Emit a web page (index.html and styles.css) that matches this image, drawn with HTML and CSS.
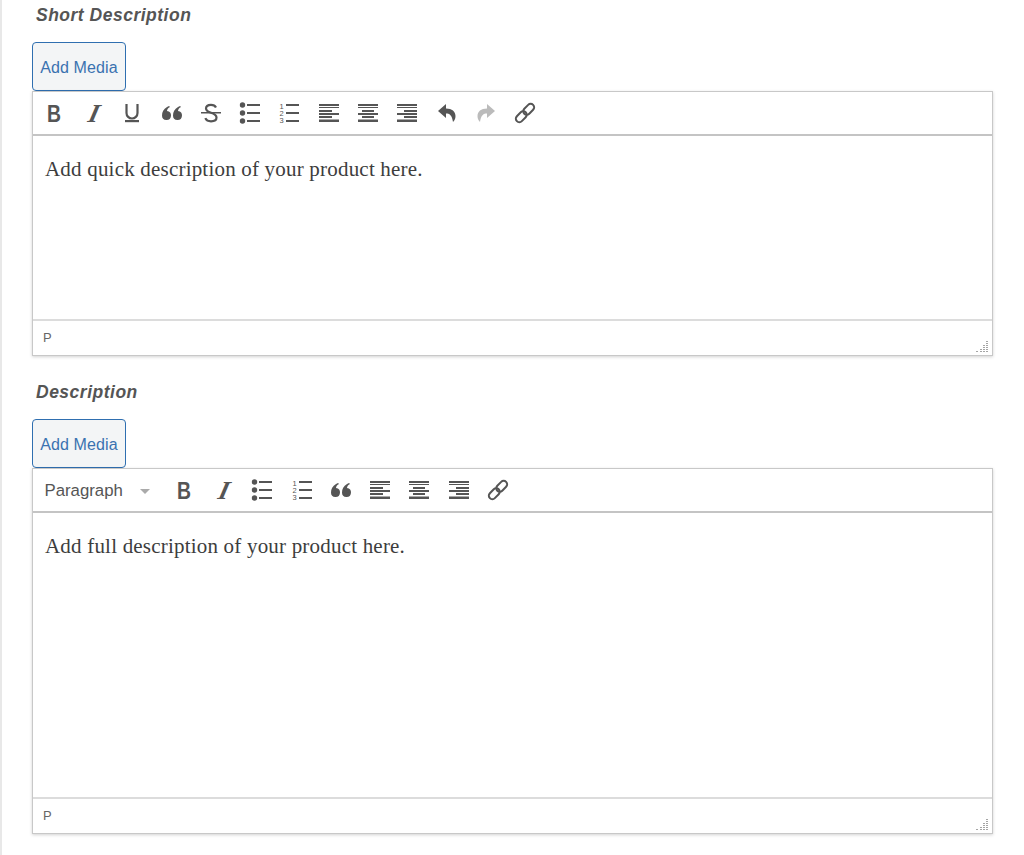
FILE: index.html
```html
<!DOCTYPE html>
<html lang="en">
<head>
<meta charset="utf-8">
<title>Product descriptions</title>
<link rel="stylesheet" href="styles.css">
</head>
<body>
<svg class="defs" width="0" height="0" aria-hidden="true">
  <defs>
    <symbol id="i-bold" viewBox="0 0 24 24"><text x="5" y="21" class="g-b" textLength="14" lengthAdjust="spacingAndGlyphs">B</text></symbol>
    <symbol id="i-italic" viewBox="0 0 24 24"><text x="0" y="0" class="g-i" transform="translate(6 20.500) skewX(-14)">I</text></symbol>
    <symbol id="i-under" viewBox="0 0 24 24"><path d="M6.500 3v9a5.500 5.500 0 0 0 11 0V3" fill="none" stroke="currentColor" stroke-width="2.200"/><rect x="5" y="19" width="14" height="2.200"/></symbol>
    <symbol id="i-quote" viewBox="0 0 24 24"><path d="M7 6C3.500 8 2 11 2 14.500a4.500 4.500 0 1 0 5-4.500c0-1.500 1-3 3-4L9 5ZM18 6c-3.500 2-5 5-5 8.500a4.500 4.500 0 1 0 5-4.500c0-1.500 1-3 3-4L20 5Z"/></symbol>
    <symbol id="i-strike" viewBox="0 0 24 24"><path d="M17 6.500C16 4.500 14.500 3.800 12 3.800 9 3.800 7 5.200 7 7.500c0 5 10.500 3.500 10.500 9 0 2.300-2.200 3.800-5.500 3.800-2.800 0-4.700-1-5.700-3.200" fill="none" stroke="currentColor" stroke-width="2.200"/><rect x="2" y="11" width="20" height="1.500"/></symbol>
    <symbol id="i-ul" viewBox="0 0 24 24"><circle cx="4.500" cy="4" r="2.700"/><circle cx="4.500" cy="12" r="2.700"/><circle cx="4.500" cy="20" r="2.700"/><rect x="9" y="3" width="13" height="2"/><rect x="9" y="11" width="13" height="2"/><rect x="9" y="19" width="13" height="2"/></symbol>
    <symbol id="i-ol" viewBox="0 0 24 24"><text x="2.500" y="8" class="g-n">1</text><text x="2.500" y="15" class="g-n">2</text><text x="2.500" y="22" class="g-n">3</text><rect x="9" y="3" width="13" height="2"/><rect x="9" y="11" width="13" height="2"/><rect x="9" y="19" width="13" height="2"/></symbol>
    <symbol id="i-left" viewBox="0 0 24 24"><rect x="2" y="3" width="20" height="2"/><rect x="2" y="6" width="20" height="1"/><rect x="2" y="9" width="13" height="2"/><rect x="2" y="12" width="20" height="2"/><rect x="2" y="15" width="13" height="2"/><rect x="2" y="18.500" width="20" height="2.500"/></symbol>
    <symbol id="i-center" viewBox="0 0 24 24"><rect x="2" y="3" width="20" height="2"/><rect x="2" y="6" width="20" height="1"/><rect x="6" y="9" width="12" height="2"/><rect x="2" y="12" width="20" height="2"/><rect x="6" y="15" width="12" height="2"/><rect x="2" y="18.500" width="20" height="2.500"/></symbol>
    <symbol id="i-right" viewBox="0 0 24 24"><rect x="2" y="3" width="20" height="2"/><rect x="2" y="6" width="20" height="1"/><rect x="9" y="9" width="13" height="2"/><rect x="2" y="12" width="20" height="2"/><rect x="9" y="15" width="13" height="2"/><rect x="2" y="18.500" width="20" height="2.500"/></symbol>
    <symbol id="i-undo" viewBox="0 0 24 24"><path d="M11 3 3 10l8 7v-4.500c3.500 0 6 1.500 7 8.500 2-2 2.500-4 2.500-6 0-4.500-3.500-7.500-9.500-7.500Z"/></symbol>
    <symbol id="i-redo" viewBox="0 0 24 24"><path d="M13 3l8 7-8 7v-4.500c-3.500 0-6 1.500-7 8.500-2-2-2.500-4-2.500-6 0-4.500 3.500-7.500 9.500-7.500Z"/></symbol>
    <symbol id="i-link" viewBox="0 0 24 24"><g fill="none" stroke="currentColor" stroke-width="2" transform="rotate(-45 12 12)"><rect x="0.500" y="8.500" width="12.500" height="7" rx="3.500"/><rect x="11" y="8.500" width="12.500" height="7" rx="3.500"/></g></symbol>
    <g id="grip" fill="#a5a5a5">
      <rect x="10" y="0" width="2" height="1"/>
      <rect x="10" y="2" width="2" height="1"/>
      <rect x="7" y="4" width="2" height="1"/><rect x="10" y="4" width="2" height="1"/>
      <rect x="7" y="6" width="2" height="1"/><rect x="10" y="6" width="2" height="1"/>
      <rect x="4" y="8" width="2" height="1"/><rect x="7" y="8" width="2" height="1"/><rect x="10" y="8" width="2" height="1"/>
      <rect x="0" y="10" width="2" height="1"/><rect x="4" y="10" width="2" height="1"/><rect x="7" y="10" width="2" height="1"/><rect x="10" y="10" width="2" height="1"/>
    </g>
  </defs>
</svg>
<main class="page">
  <section class="field">
    <h2 class="field-title">Short Description</h2>
    <button class="media-btn" type="button">Add Media</button>
    <div class="editor editor-short">
      <div class="toolbar">
        <span class="tool"><svg class="ic"><use href="#i-bold"/></svg></span>
        <span class="tool"><svg class="ic"><use href="#i-italic"/></svg></span>
        <span class="tool"><svg class="ic"><use href="#i-under"/></svg></span>
        <span class="tool"><svg class="ic"><use href="#i-quote"/></svg></span>
        <span class="tool"><svg class="ic"><use href="#i-strike"/></svg></span>
        <span class="tool"><svg class="ic"><use href="#i-ul"/></svg></span>
        <span class="tool"><svg class="ic"><use href="#i-ol"/></svg></span>
        <span class="tool"><svg class="ic"><use href="#i-left"/></svg></span>
        <span class="tool"><svg class="ic"><use href="#i-center"/></svg></span>
        <span class="tool"><svg class="ic"><use href="#i-right"/></svg></span>
        <span class="tool"><svg class="ic"><use href="#i-undo"/></svg></span>
        <span class="tool tool-off"><svg class="ic"><use href="#i-redo"/></svg></span>
        <span class="tool"><svg class="ic"><use href="#i-link"/></svg></span>
      </div>
      <div class="content"><p>Add quick description of your product here.</p></div>
      <div class="status">P
        <svg class="grip" width="12" height="11" viewBox="0 0 12 11"><use href="#grip"/></svg>
      </div>
    </div>
  </section>
  <section class="field field-next">
    <h2 class="field-title">Description</h2>
    <button class="media-btn" type="button">Add Media</button>
    <div class="editor editor-full">
      <div class="toolbar toolbar-full">
        <span class="format">Paragraph<i class="caret"></i></span>
        <span class="tool"><svg class="ic"><use href="#i-bold"/></svg></span>
        <span class="tool"><svg class="ic"><use href="#i-italic"/></svg></span>
        <span class="tool"><svg class="ic"><use href="#i-ul"/></svg></span>
        <span class="tool"><svg class="ic"><use href="#i-ol"/></svg></span>
        <span class="tool"><svg class="ic"><use href="#i-quote"/></svg></span>
        <span class="tool"><svg class="ic"><use href="#i-left"/></svg></span>
        <span class="tool"><svg class="ic"><use href="#i-center"/></svg></span>
        <span class="tool"><svg class="ic"><use href="#i-right"/></svg></span>
        <span class="tool"><svg class="ic"><use href="#i-link"/></svg></span>
      </div>
      <div class="content"><p>Add full description of your product here.</p></div>
      <div class="status">P
        <svg class="grip" width="12" height="11" viewBox="0 0 12 11"><use href="#grip"/></svg>
      </div>
    </div>
  </section>
</main>
</body>
</html>
```
FILE: styles.css
```css
* { box-sizing: border-box; }
html, body { margin: 0; padding: 0; background: #fff; }
body { height: 855px; overflow: hidden; font-family: "Liberation Sans", Arial, sans-serif; color: #555; }
.defs { position: absolute; }
.page { height: 855px; border-left: 2px solid #e8e8e8; padding: 4px 0 0 30px; }
.field-next { margin-top: 25px; }
.field-title { margin: 0 0 16px 4px; padding-top: 1px; font-size: 17.500px; line-height: 21px; letter-spacing: 0.500px; font-weight: bold; font-style: italic; color: #555; }
.media-btn { display: block; width: 94px; height: 49px; padding: 2px 0 0; background: #f3f5f6; border: 1px solid #2f6fb0; border-radius: 4px; color: #3a72b0; font-family: "Liberation Sans", Arial, sans-serif; font-size: 16px; letter-spacing: 0.100px; }
.editor { width: 961px; border: 1px solid #c8c8c8; display: flex; flex-direction: column; box-shadow: 0 1px 3px rgba(0,0,0,.18); background: #fff; }
.editor-short { height: 265px; }
.editor-full { height: 366px; }
.toolbar { height: 44px; flex: none; display: flex; align-items: center; padding-left: 1px; border-bottom: 2px solid #c4c4c4; color: #555; fill: #555; }
.toolbar-full { padding-left: 0.500px; }
.tool { width: 39.300px; height: 24px; flex: none; display: flex; justify-content: center; color: #555; fill: #555; }
.tool-off { color: #bbb; fill: #bbb; }
.ic { width: 24px; height: 24px; }
.g-b { font: bold 24px "Liberation Sans", sans-serif; }
.g-i { font: italic bold 26px "Liberation Serif", serif; }
.g-n { font: 7.500px "Liberation Sans", sans-serif; }
.format { width: 130.500px; flex: none; display: flex; align-items: center; padding: 2px 0 0 11px; font-size: 16.800px; color: #555; }
.caret { margin-left: 17px; width: 0; height: 0; border: 5px solid transparent; border-top-color: #aaa; border-bottom: 0; }
.content { flex: 1; padding: 21px 12px 0; font-family: "Liberation Serif", "Times New Roman", serif; font-size: 21px; letter-spacing: 0.200px; color: #3d3d3d; }
.content p { margin: 0; line-height: 24px; }
.status { height: 36px; flex: none; position: relative; display: flex; align-items: center; padding: 0 0 2px 10px; border-top: 2px solid #dcdcdc; font-size: 13px; color: #666; }
.grip { position: absolute; right: 4px; bottom: 3px; }
```
